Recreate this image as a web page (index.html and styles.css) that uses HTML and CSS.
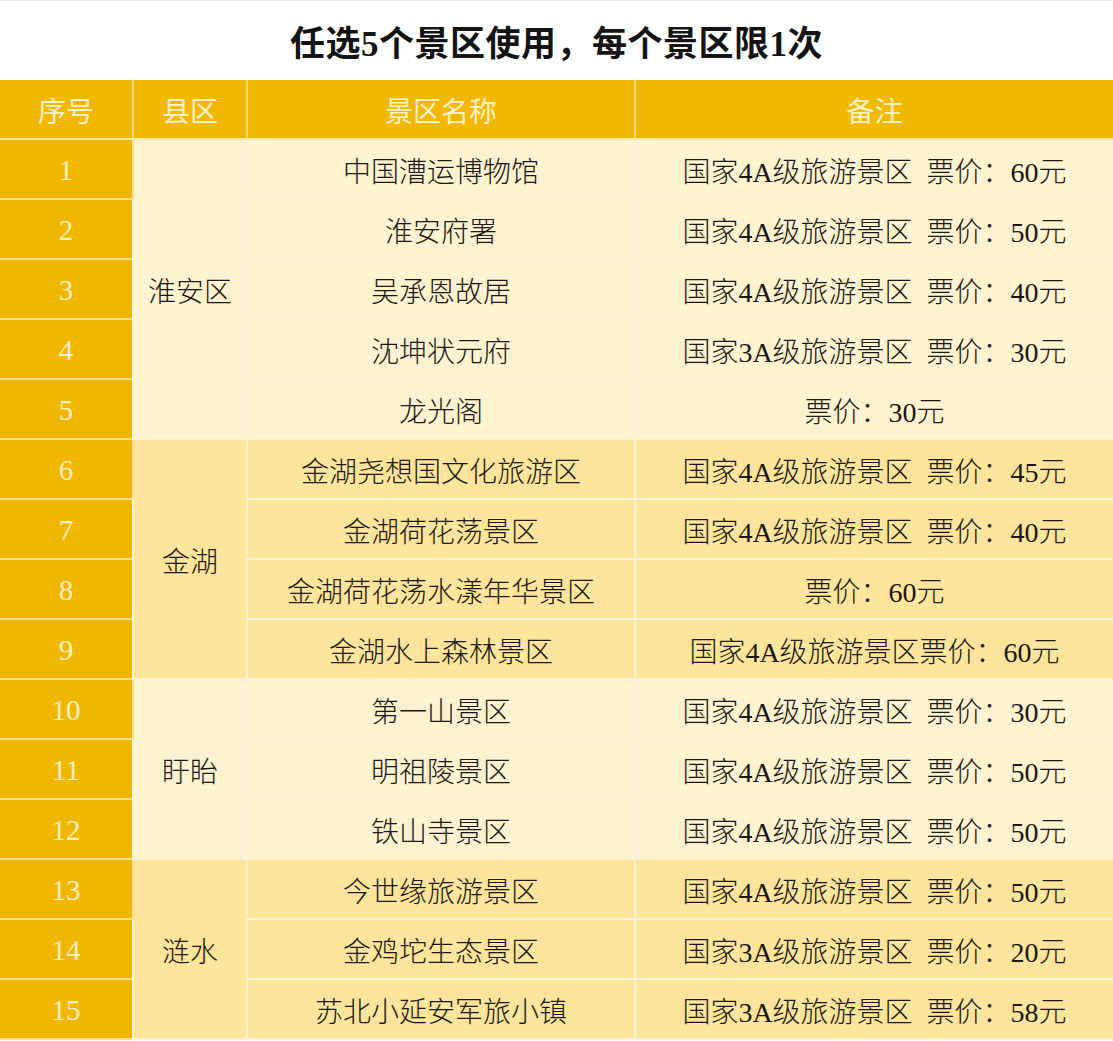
FILE: index.html
```html
<!DOCTYPE html>
<html lang="zh-CN">
<head>
<meta charset="utf-8">
<title>任选5个景区使用</title>
<link rel="stylesheet" href="styles.css">
</head>
<body>
<div class="page">
  <h1 class="title">任选5个景区使用，每个景区限1次</h1>
  <table class="grid">
    <colgroup>
      <col class="c-no"><col class="c-area"><col class="c-name"><col class="c-note">
    </colgroup>
    <thead>
      <tr><th>序号</th><th>县区</th><th>景区名称</th><th>备注</th></tr>
    </thead>
    <tbody class="g-light">
      <tr><td class="no">1</td><td class="area" rowspan="5">淮安区</td><td>中国漕运博物馆</td><td>国家4A级旅游景区&ensp;票价：60元</td></tr>
      <tr><td class="no">2</td><td>淮安府署</td><td>国家4A级旅游景区&ensp;票价：50元</td></tr>
      <tr><td class="no">3</td><td>吴承恩故居</td><td>国家4A级旅游景区&ensp;票价：40元</td></tr>
      <tr><td class="no">4</td><td>沈坤状元府</td><td>国家3A级旅游景区&ensp;票价：30元</td></tr>
      <tr><td class="no">5</td><td>龙光阁</td><td>票价：30元</td></tr>
    </tbody>
    <tbody class="g-dark">
      <tr><td class="no">6</td><td class="area" rowspan="4">金湖</td><td>金湖尧想国文化旅游区</td><td>国家4A级旅游景区&ensp;票价：45元</td></tr>
      <tr><td class="no">7</td><td>金湖荷花荡景区</td><td>国家4A级旅游景区&ensp;票价：40元</td></tr>
      <tr><td class="no">8</td><td>金湖荷花荡水漾年华景区</td><td>票价：60元</td></tr>
      <tr><td class="no">9</td><td>金湖水上森林景区</td><td>国家4A级旅游景区票价：60元</td></tr>
    </tbody>
    <tbody class="g-light">
      <tr><td class="no">10</td><td class="area" rowspan="3">盱眙</td><td>第一山景区</td><td>国家4A级旅游景区&ensp;票价：30元</td></tr>
      <tr><td class="no">11</td><td>明祖陵景区</td><td>国家4A级旅游景区&ensp;票价：50元</td></tr>
      <tr><td class="no">12</td><td>铁山寺景区</td><td>国家4A级旅游景区&ensp;票价：50元</td></tr>
    </tbody>
    <tbody class="g-dark">
      <tr><td class="no">13</td><td class="area" rowspan="3">涟水</td><td>今世缘旅游景区</td><td>国家4A级旅游景区&ensp;票价：50元</td></tr>
      <tr><td class="no">14</td><td>金鸡坨生态景区</td><td>国家3A级旅游景区&ensp;票价：20元</td></tr>
      <tr><td class="no">15</td><td>苏北小延安军旅小镇</td><td>国家3A级旅游景区&ensp;票价：58元</td></tr>
    </tbody>
  </table>
</div>
</body>
</html>
```

FILE: styles.css
```css
html, body {
  margin: 0;
  padding: 0;
  background: #ffffff;
}

.page {
  width: 1113px;
  font-family: "Liberation Serif", "Noto Sans CJK SC", serif;
  color: #1c1710;
}

.title {
  margin: 0;
  height: 79px;
  border-top: 1px solid #e6e6e6;
  display: flex;
  align-items: center;
  justify-content: center;
  font-family: "Liberation Serif", "Noto Sans CJK SC", serif;
  font-size: 35px;
  font-weight: 700;
  color: #141414;
  letter-spacing: 0.5px;
}

.grid {
  width: 1113px;
  border-collapse: collapse;
  table-layout: fixed;
}

.c-no { width: 133px; }
.c-area { width: 114px; }
.c-name { width: 388px; }
.c-note { width: 478px; }

.grid th,
.grid td {
  height: 56px;
  padding: 2px 0 0;
  text-align: center;
  vertical-align: middle;
  font-size: 28px;
  font-weight: 300;
  border: 2px solid #fdf4d6;
  white-space: nowrap;
}

.grid tr > :first-child { border-left: 0; }
.grid tr > :last-child { border-right: 0; }

.grid th {
  background: #f1b906;
  color: #fdf1c4;
  font-weight: 400;
  border-top: 0;
  border-color: #f9dc7a;
  border-bottom-color: #fbe7a4;
}

.grid td.no {
  background: #f0b700;
  color: #fdf0c2;
  font-size: 29px;
  border-color: #f9e19a;
}

.g-light td { background: #fdf3d0; }
.g-dark td { background: #fde59d; }

.g-light td.area,
.g-dark td.area {
  font-size: 28px;
}
```
